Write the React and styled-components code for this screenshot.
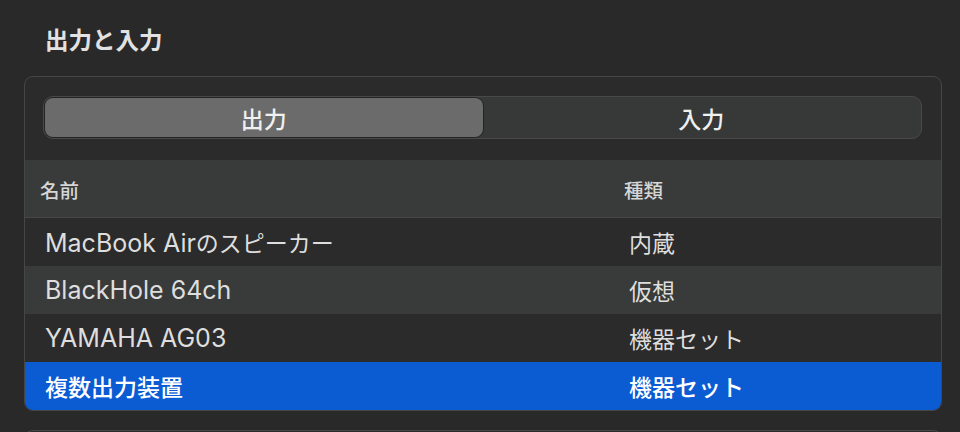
import React from "react";
import styled, { createGlobalStyle } from "styled-components";

const devices = [
  { name: "MacBook Airのスピーカー", kind: "内蔵" },
  { name: "BlackHole 64ch", kind: "仮想" },
  { name: "YAMAHA AG03", kind: "機器セット" },
  { name: "複数出力装置", kind: "機器セット" },
];

const GlobalStyle = createGlobalStyle`
  html, body {
    margin: 0;
    padding: 0;
    background: #292929;
  }
  body {
    font-family: Inter, "Noto Sans CJK JP", "Noto Sans", sans-serif;
    color: #dedede;
    -webkit-font-smoothing: antialiased;
  }
`;

const Page = styled.div`
  height: 432px;
  overflow: hidden;
  padding: 0 18px 0 24px;
  box-sizing: border-box;
`;

const Title = styled.h2`
  margin: 0;
  height: 76px;
  box-sizing: border-box;
  padding: 26px 0 0 21px;
  font-size: 23.5px;
  line-height: 30px;
  font-weight: 700;
  color: #e2e2e2;
`;

const Card = styled.div`
  border: 1px solid #464646;
  border-radius: 9px;
  background: #2b2b2b;
  overflow: hidden;
`;

const Segmented = styled.div`
  display: grid;
  grid-template-columns: 1fr 1fr;
  height: 43px;
  box-sizing: border-box;
  margin: 19px 19px 21px 18px;
  padding: 1px;
  border: 1px solid #494949;
  border-radius: 10px;
  background: #373938;
`;

const Segment = styled.div`
  display: flex;
  align-items: center;
  justify-content: center;
  border-radius: 8px;
  font-size: 23px;
  font-weight: 500;
  color: #f0f0f0;
  background: ${(p) => (p.active ? "#6b6b6b" : "transparent")};
  box-shadow: ${(p) => (p.active ? "0 0 0 1px rgba(0, 0, 0, 0.35)" : "none")};
`;

const Table = styled.div`
  display: flex;
  flex-direction: column;
`;

const HeaderRow = styled.div`
  display: grid;
  grid-template-columns: 584px 1fr;
  height: 58px;
  box-sizing: border-box;
  align-items: center;
  background: #393b3b;
  border-bottom: 1px solid #464848;
  font-size: 19.5px;
  font-weight: 500;
  color: #d6d6d6;
`;

const HeaderCell = styled.div`
  padding-left: 15px;
  padding-top: 2px;
`;

const Row = styled.div`
  display: grid;
  grid-template-columns: 584px 1fr;
  height: 48px;
  align-items: center;
  font-size: 23px;
  background: ${(p) =>
    p.selected ? "#0b5bd3" : p.striped ? "#393b3b" : "#2b2b2b"};
  color: ${(p) => (p.selected ? "#ffffff" : "#dedede")};
  font-weight: ${(p) => (p.selected ? 500 : 400)};
`;

const Cell = styled.div`
  padding-left: 20px;
  white-space: nowrap;
`;

// Latin runs sit a touch larger so they match the system font's width
const Latin = styled.span`
  font-size: 25px;
`;

const NextCard = styled.div`
  margin-top: 19px;
  height: 20px;
  border: 1px solid #464646;
  border-bottom: none;
  border-radius: 9px 9px 0 0;
  background: #2b2b2b;
`;

const mixed = (text) =>
  text
    .split(/([\x20-\x7e]+)/)
    .filter(Boolean)
    .map((part, i) =>
      /^[\x20-\x7e]+$/.test(part) ? <Latin key={i}>{part}</Latin> : part
    );

export default function App() {
  return (
    <>
      <GlobalStyle />
      <Page>
        <Title>出力と入力</Title>
        <Card>
          <Segmented>
            <Segment active>出力</Segment>
            <Segment>入力</Segment>
          </Segmented>
          <Table>
            <HeaderRow>
              <HeaderCell>名前</HeaderCell>
              <HeaderCell>種類</HeaderCell>
            </HeaderRow>
            {devices.map((d, i) => (
              <Row
                key={d.name}
                striped={i % 2 === 1}
                selected={i === devices.length - 1}
              >
                <Cell>{mixed(d.name)}</Cell>
                <Cell>{d.kind}</Cell>
              </Row>
            ))}
          </Table>
        </Card>
        <NextCard />
      </Page>
    </>
  );
}
